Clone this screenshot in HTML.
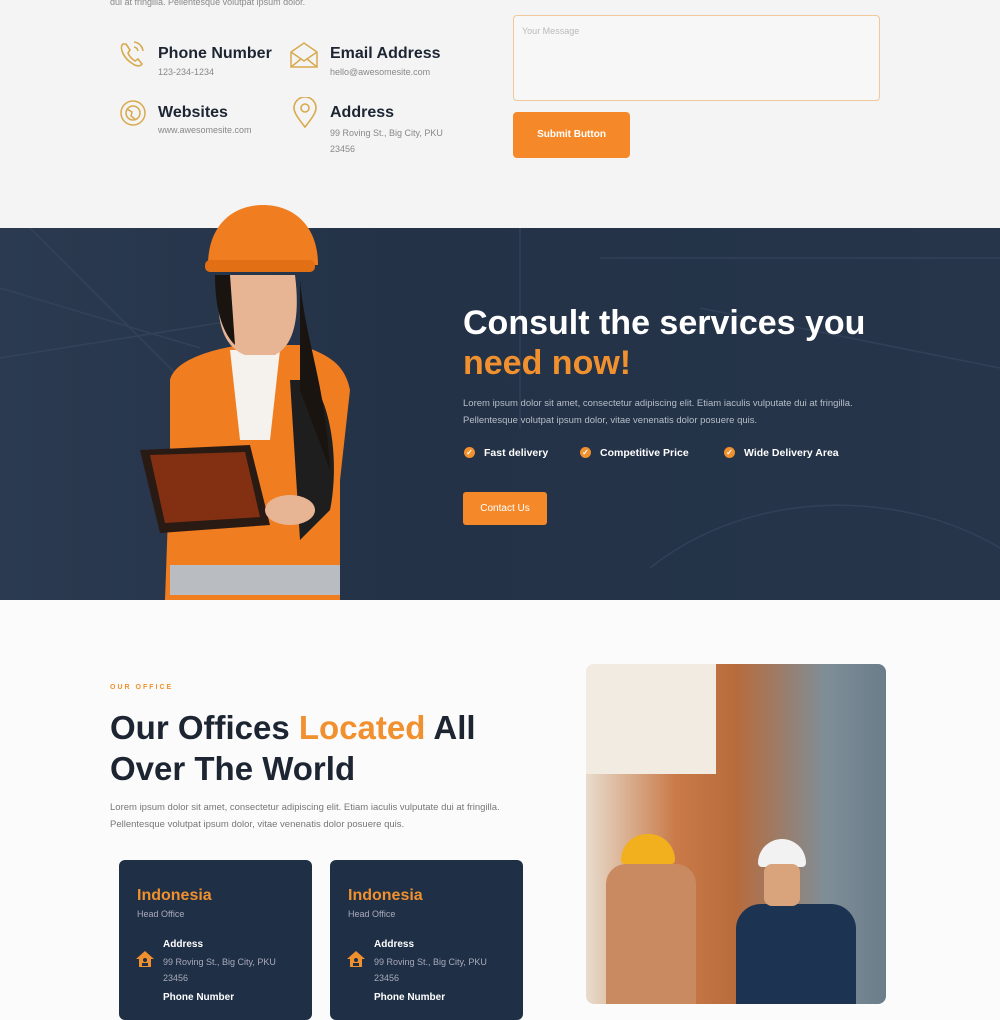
<!DOCTYPE html>
<html><head><meta charset="utf-8"><style>
*{margin:0;padding:0;box-sizing:border-box}
body{width:1000px;height:1000px;overflow:hidden;font-family:"Liberation Sans",sans-serif;background:#fbfbfb;position:relative}
.a{position:absolute}
.top{left:0;top:0;width:1000px;height:228px;background:#f4f4f4}
.t{font-size:9px;color:#888}
.h{font-weight:bold;color:#1d2533;font-size:16px}
.dark{left:0;top:228px;width:1000px;height:372px;background:linear-gradient(90deg,#2b3a50,#233247 40%,#26354a)}
.card{width:193px;height:160px;background:#1f2f45;border-radius:6px;top:860px}
.ck{top:447px;font-size:10.5px;font-weight:bold;color:#fff}
.dot{position:absolute;left:-20px;top:0;width:11px;height:11px;border-radius:50%;background:#f0902e;color:#fff;font-size:8px;line-height:11px;text-align:center}
</style></head><body>
<div class="a top"></div>
<div class="a t" style="left:110px;top:-3px">dui at fringilla. Pellentesque volutpat ipsum dolor.</div>
<svg class="a" style="left:117px;top:38px" width="32" height="34" viewBox="0 0 32 34" fill="none" stroke="#d9a94e" stroke-width="1.6"><path d="M6 6c-4 3 0 14 10 20 4 3 8 2 9 0l-4-5-3 2c-3-2-6-5-7-8l2-3-4-6z"/><path d="M17 4a10 10 0 0 1 9 9M17 9a5 5 0 0 1 4 4"/></svg>
<div class="a h" style="left:158px;top:45px">Phone Number</div>
<div class="a t" style="left:158px;top:67px">123-234-1234</div>
<svg class="a" style="left:289px;top:40px" width="30" height="30" viewBox="0 0 30 30" fill="none" stroke="#d9a94e" stroke-width="1.5"><path d="M2 12l13-9 13 9v15H2z"/><path d="M2 12l13 9 13-9M2 27l10-8M28 27l-10-8"/></svg>
<div class="a h" style="left:330px;top:45px">Email Address</div>
<div class="a t" style="left:330px;top:67px">hello@awesomesite.com</div>
<svg class="a" style="left:119px;top:99px" width="28" height="28" viewBox="0 0 28 28" fill="none" stroke="#d9a94e" stroke-width="1.5"><circle cx="14" cy="14" r="12"/><circle cx="14" cy="14" r="7"/><path d="M8 10l5 3-1 4 4 3"/></svg>
<div class="a h" style="left:158px;top:104px">Websites</div>
<div class="a t" style="left:158px;top:125px">www.awesomesite.com</div>
<svg class="a" style="left:292px;top:97px" width="26" height="32" viewBox="0 0 26 32" fill="none" stroke="#d9a94e" stroke-width="1.6"><path d="M13 30C5 20 2 15 2 11a11 11 0 0 1 22 0c0 4-3 9-11 19z"/><circle cx="13" cy="11" r="4"/></svg>
<div class="a h" style="left:330px;top:104px">Address</div>
<div class="a t" style="left:330px;top:125px;line-height:16px">99 Roving St., Big City, PKU<br>23456</div>
<div class="a" style="left:513px;top:-10px;width:367px;height:10px;border:1px solid #f0c89a;border-radius:4px"></div>
<div class="a" style="left:513px;top:15px;width:367px;height:86px;border:1px solid #f0c89a;border-radius:4px;background:#f7f7f7"><span style="font-size:9px;color:#bbb;position:absolute;left:8px;top:10px">Your Message</span></div>
<div class="a" style="left:513px;top:112px;width:117px;height:46px;background:#f5892a;border-radius:4px;color:#fff;font-size:10px;font-weight:bold;text-align:center;line-height:46px">Submit Button</div>

<div class="a dark"></div>
<svg class="a" style="left:0;top:228px" width="1000" height="372"><g stroke="#3a4a60" stroke-width="1.5" fill="none" opacity=".6"><path d="M0 60l200 60M30 0l150 150M0 130l250 -40M520 0v200M600 30h400M700 80l300 60M650 340c100-80 250-80 350-20"/></g></svg>
<svg class="a" style="left:130px;top:200px" width="260" height="400" viewBox="0 0 260 400">
<path d="M35 400l5-140 0-80 c5-20 40-30 70-35h60c30 10 45 20 50 45l-10 90 0 120z" fill="#f07d20"/>
<path d="M100 150h50l-10 90h-30z" fill="#f5f2ee"/>
<path d="M40 365h170v30H40z" fill="#b9bcc0"/>
<path d="M180 180c20 20 30 80 20 130l-30 30-10-160z" fill="#1e1e1e"/>
<path d="M90 75c-5 40 0 70 25 80h30c20-10 25-40 20-80z" fill="#e8b594"/>
<path d="M85 75c0 40 10 60 20 70l-5-70zM170 80c5 60 25 100 30 190l-30-80z" fill="#1a1410"/>
<path d="M78 65c0-40 25-60 55-60s55 20 55 60z" fill="#f07d20"/>
<rect x="75" y="60" width="110" height="12" rx="5" fill="#e36f14"/>
<path d="M10 250l110-5 20 80-110 8z" fill="#2a1a14"/>
<path d="M20 255l95-3 15 65-95 6z" fill="#c04010" opacity=".6"/>
<ellipse cx="160" cy="310" rx="25" ry="15" fill="#e8b594"/>
</svg>
<div class="a" style="left:463px;top:303px;font-size:34px;font-weight:bold;color:#fff;line-height:40px">Consult the services you<br><span style="color:#f0902e">need now!</span></div>
<div class="a" style="left:463px;top:395px;font-size:9.5px;color:#b7bec8;line-height:17px">Lorem ipsum dolor sit amet, consectetur adipiscing elit. Etiam iaculis vulputate dui at fringilla.<br>Pellentesque volutpat ipsum dolor, vitae venenatis dolor posuere quis.</div>
<div class="a ck" style="left:484px"><span class="dot">✓</span>Fast delivery</div>
<div class="a ck" style="left:600px"><span class="dot">✓</span>Competitive Price</div>
<div class="a ck" style="left:744px"><span class="dot">✓</span>Wide Delivery Area</div>
<div class="a" style="left:463px;top:492px;width:84px;height:33px;background:#f5892a;border-radius:3px;color:#fff;font-size:10px;text-align:center;line-height:33px">Contact Us</div>

<div class="a" style="left:110px;top:684px;font-size:7px;letter-spacing:2px;color:#f0902e;font-weight:bold">OUR OFFICE</div>
<div class="a" style="left:110px;top:707px;font-size:33px;font-weight:bold;color:#1d2533;line-height:41px">Our Offices <span style="color:#f0902e">Located</span> All<br>Over The World</div>
<div class="a" style="left:110px;top:799px;font-size:9.5px;color:#777;line-height:17px">Lorem ipsum dolor sit amet, consectetur adipiscing elit. Etiam iaculis vulputate dui at fringilla.<br>Pellentesque volutpat ipsum dolor, vitae venenatis dolor posuere quis.</div>
<div class="a card" style="left:119px"></div><div class="a card" style="left:330px"></div>
<div class="a" style="left:137px;top:887px;color:#f0902e;font-weight:bold;font-size:16px">Indonesia</div>
<div class="a" style="left:348px;top:887px;color:#f0902e;font-weight:bold;font-size:16px">Indonesia</div>
<div class="a" style="left:137px;top:909px;color:#aab;font-size:9px">Head Office</div>
<div class="a" style="left:348px;top:909px;color:#aab;font-size:9px">Head Office</div>
<svg class="a" style="left:135px;top:950px" width="20" height="18" viewBox="0 0 20 18"><path d="M10 1L1 9h3v8h12V9h3z" fill="#f0902e"/><circle cx="10" cy="10" r="2" fill="#1f2f45"/><rect x="7" y="13" width="6" height="3" fill="#1f2f45"/></svg>
<svg class="a" style="left:346px;top:950px" width="20" height="18" viewBox="0 0 20 18"><path d="M10 1L1 9h3v8h12V9h3z" fill="#f0902e"/><circle cx="10" cy="10" r="2" fill="#1f2f45"/><rect x="7" y="13" width="6" height="3" fill="#1f2f45"/></svg>
<div class="a" style="left:163px;top:939px;color:#fff;font-size:10px;font-weight:bold">Address</div>
<div class="a" style="left:374px;top:939px;color:#fff;font-size:10px;font-weight:bold">Address</div>
<div class="a" style="left:163px;top:954px;color:#aab;font-size:9px;line-height:16px">99 Roving St., Big City, PKU<br>23456</div>
<div class="a" style="left:374px;top:954px;color:#aab;font-size:9px;line-height:16px">99 Roving St., Big City, PKU<br>23456</div>
<div class="a" style="left:163px;top:992px;color:#fff;font-size:10px;font-weight:bold">Phone Number</div>
<div class="a" style="left:374px;top:992px;color:#fff;font-size:10px;font-weight:bold">Phone Number</div>
<div class="a" style="left:586px;top:664px;width:300px;height:340px;border-radius:8px;overflow:hidden;background:linear-gradient(90deg,#e8dccd 0%,#c97a48 30%,#b86b3c 50%,#7f8e98 80%,#6a7d8a 100%)">
<div class="a" style="left:0;top:0;width:130px;height:110px;background:#f2ebe2"></div>
<div class="a" style="left:20px;top:200px;width:90px;height:140px;background:#c98a62;border-radius:20px 20px 0 0"></div>
<div class="a" style="left:35px;top:170px;width:54px;height:30px;background:#f2b01e;border-radius:27px 27px 4px 4px"></div>
<div class="a" style="left:150px;top:240px;width:120px;height:100px;background:#1c3352;border-radius:25px 25px 0 0"></div>
<div class="a" style="left:172px;top:175px;width:48px;height:28px;background:#f2f2f2;border-radius:24px 24px 4px 4px"></div>
<div class="a" style="left:178px;top:200px;width:36px;height:42px;background:#d9a47c;border-radius:8px"></div>
</div>
</body></html>
